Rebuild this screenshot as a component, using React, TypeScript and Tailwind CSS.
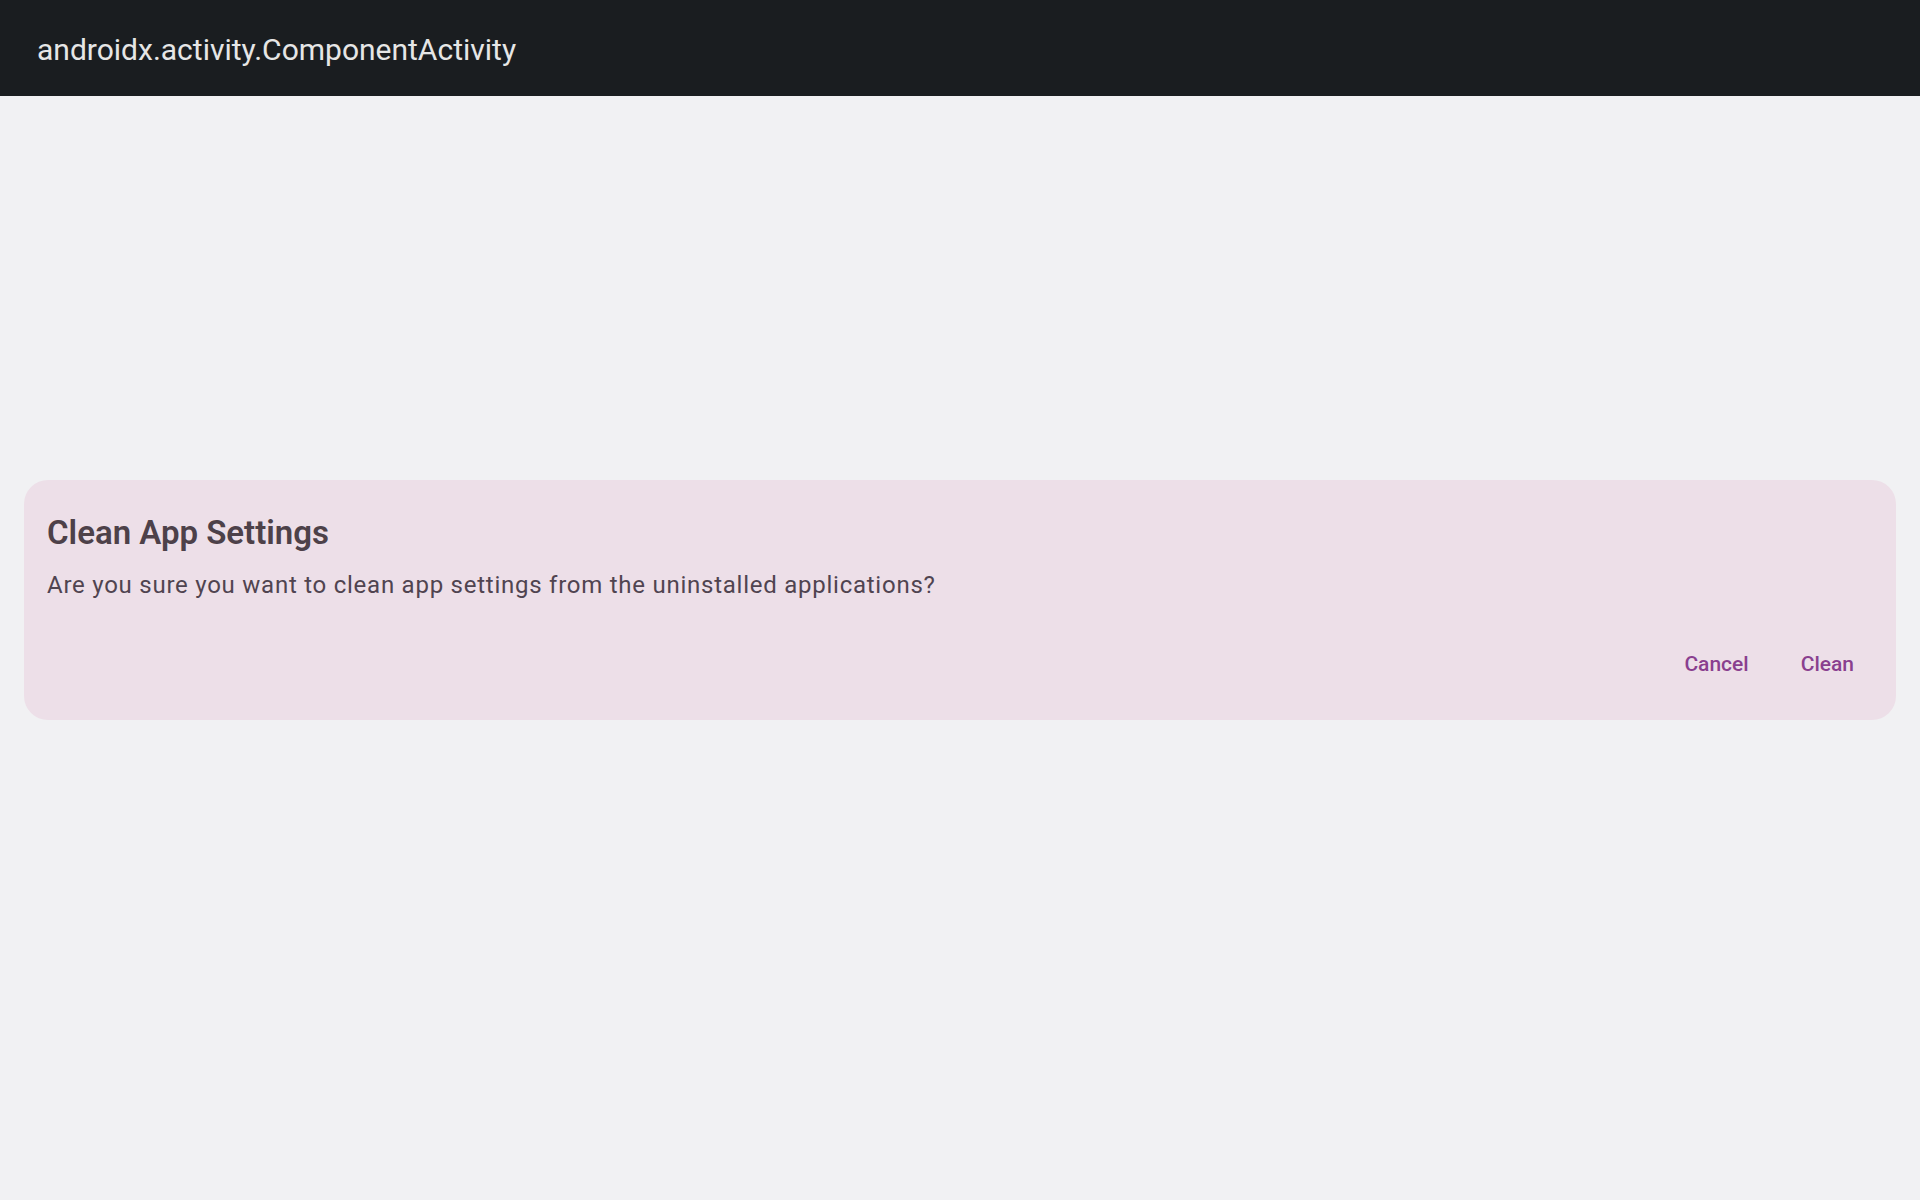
import React from 'react';

const CleanSettingsDialog: React.FC = () => {
  return (
    <div className="fixed inset-0 flex items-center px-6">
      <div className="w-full h-[240px] rounded-3xl bg-[#eddfe8] pl-[23px] pt-[34px] flex flex-col">
        <h2 className="text-[33px] leading-[38px] font-semibold text-[#4d4149]">Clean App Settings</h2>
        <p className="mt-[17px] text-[24px] leading-[32px] tracking-[0.75px] text-[#504450]">
          Are you sure you want to clean app settings from the uninstalled applications?
        </p>
        <div className="mt-[51px] flex justify-end gap-[20px] pr-[26px]">
          <button className="px-4 text-[21px] leading-[24px] font-medium text-[#8a3f8f]">Cancel</button>
          <button className="px-4 text-[21px] leading-[24px] font-medium text-[#8a3f8f]">Clean</button>
        </div>
      </div>
    </div>
  );
};

export default function App() {
  return (
    <div className="min-h-[1200px] bg-[#f1f1f3] font-['Roboto',sans-serif]">
      {/* Toolbar */}
      <header className="h-24 bg-[#1a1d20] flex items-center px-[37px] pt-[3px]">
        <span className="text-[30px] leading-[36px] text-[#e6e6e6]">androidx.activity.ComponentActivity</span>
      </header>
      <CleanSettingsDialog />
    </div>
  );
}
